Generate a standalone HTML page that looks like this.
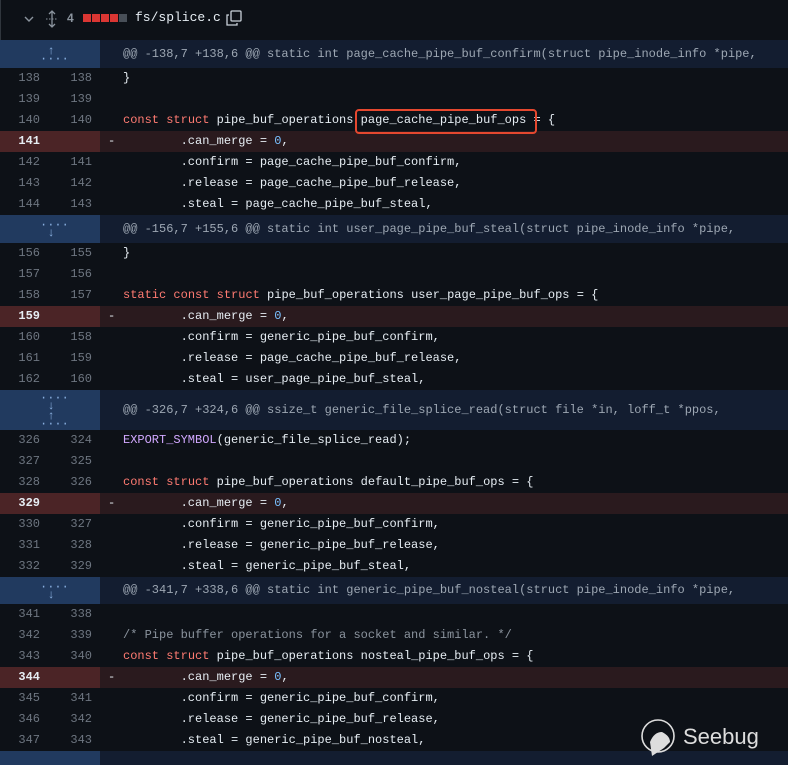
<!DOCTYPE html><html><head><style>
body{margin:0;background:#0d1117;width:788px;height:765px;overflow:hidden;font-family:"Liberation Mono",monospace;font-size:12px;color:#e6edf3;position:relative}
.hdr{position:absolute;top:0;left:0;width:788px;height:40px;background:#0d1117;border-left:1px solid #30363d}
.r{position:absolute;left:0;width:788px;height:21px;line-height:21px}
.o,.n{position:absolute;top:0;width:40px;text-align:right;color:#6e7681}
.o{left:0}.n{left:52px}
.g{position:absolute;left:0;top:0;width:100px;height:100%}
.c{position:absolute;left:123px;top:0;white-space:pre}
.d{background:#2a1a1e}.d .g{background:#4b2426}.d .o{color:#e6edf3;font-weight:bold}
.mi{position:absolute;left:108px;top:0}
.h{position:absolute;left:0;width:788px;background:#131d30}
.h .g{background:#213a5f}
.h .c{color:#9da7b3;line-height:inherit}
.k{color:#ff7b72}.m{color:#79c0ff}.p{color:#d2a8ff}.cm{color:#8b949e}
.ar{position:absolute;left:40px;width:22px;text-align:center;color:#8ab0e0;font-size:12px;line-height:8px}
</style></head><body>
<div class="hdr">
<svg style="position:absolute;left:22px;top:13px" width="12" height="12" viewBox="0 0 12 12"><path d="M2 4l4 4 4-4" stroke="#8b949e" stroke-width="1.4" fill="none"/></svg>
<svg style="position:absolute;left:44px;top:10px" width="14" height="18" viewBox="0 0 14 18"><path d="M7 1v16M4 4l3-3 3 3M4 14l3 3 3-3" stroke="#8b949e" stroke-width="1.3" fill="none"/><path d="M1 9h12" stroke="#8b949e" stroke-dasharray="1.5 1.5"/></svg>
<span style="position:absolute;left:66px;top:11px;color:#8b949e;font-family:'Liberation Sans',sans-serif;font-weight:bold;font-size:12px">4</span>
<span style="position:absolute;left:82px;top:14px;width:8px;height:8px;background:#da3633"></span>
<span style="position:absolute;left:91px;top:14px;width:8px;height:8px;background:#da3633"></span>
<span style="position:absolute;left:100px;top:14px;width:8px;height:8px;background:#da3633"></span>
<span style="position:absolute;left:109px;top:14px;width:8px;height:8px;background:#da3633"></span>
<span style="position:absolute;left:118px;top:14px;width:8px;height:8px;background:#484f58"></span>
<span style="position:absolute;left:134px;top:10px;font-size:13px;color:#e6edf3">fs/splice.c</span>
<svg style="position:absolute;left:225px;top:10px" width="16" height="16" viewBox="0 0 16 16"><rect x="5" y="1" width="10" height="10" rx="1" stroke="#c9d1d9" fill="none" stroke-width="1.3"/><path d="M3 5H1v10h10v-2" stroke="#c9d1d9" fill="none" stroke-width="1.3"/></svg>
</div>

<div class="h" style="top:40px;height:28px;line-height:28px"><div class="g"><div class="ar" style="top:7px">↑<br>····</div></div><div class="c">@@ -138,7 +138,6 @@ static int page_cache_pipe_buf_confirm(struct pipe_inode_info *pipe,</div></div>
<div class="r" style="top:68px"><span class="o">138</span><span class="n">138</span><div class="c">}</div></div>
<div class="r" style="top:89px"><span class="o">139</span><span class="n">139</span></div>
<div class="r" style="top:110px"><span class="o">140</span><span class="n">140</span><div class="c"><span class="k">const</span> <span class="k">struct</span> pipe_buf_operations page_cache_pipe_buf_ops = {</div></div>
<div class="r d" style="top:131px"><div class="g"></div><span class="o">141</span><span class="mi">-</span><div class="c">        .can_merge = <span class="m">0</span>,</div></div>
<div class="r" style="top:152px"><span class="o">142</span><span class="n">141</span><div class="c">        .confirm = page_cache_pipe_buf_confirm,</div></div>
<div class="r" style="top:173px"><span class="o">143</span><span class="n">142</span><div class="c">        .release = page_cache_pipe_buf_release,</div></div>
<div class="r" style="top:194px"><span class="o">144</span><span class="n">143</span><div class="c">        .steal = page_cache_pipe_buf_steal,</div></div>
<div style="position:absolute;left:355px;top:109px;width:178px;height:21px;border:2px solid #e5482f;border-radius:4px"></div>

<div class="h" style="top:215px;height:28px;line-height:28px"><div class="g"><div class="ar" style="top:6px">····<br>↓</div></div><div class="c">@@ -156,7 +155,6 @@ static int user_page_pipe_buf_steal(struct pipe_inode_info *pipe,</div></div>
<div class="r" style="top:243px"><span class="o">156</span><span class="n">155</span><div class="c">}</div></div>
<div class="r" style="top:264px"><span class="o">157</span><span class="n">156</span></div>
<div class="r" style="top:285px"><span class="o">158</span><span class="n">157</span><div class="c"><span class="k">static</span> <span class="k">const</span> <span class="k">struct</span> pipe_buf_operations user_page_pipe_buf_ops = {</div></div>
<div class="r d" style="top:306px"><div class="g"></div><span class="o">159</span><span class="mi">-</span><div class="c">        .can_merge = <span class="m">0</span>,</div></div>
<div class="r" style="top:327px"><span class="o">160</span><span class="n">158</span><div class="c">        .confirm = generic_pipe_buf_confirm,</div></div>
<div class="r" style="top:348px"><span class="o">161</span><span class="n">159</span><div class="c">        .release = page_cache_pipe_buf_release,</div></div>
<div class="r" style="top:369px"><span class="o">162</span><span class="n">160</span><div class="c">        .steal = user_page_pipe_buf_steal,</div></div>

<div class="h" style="top:390px;height:40px;line-height:40px"><div class="g"><div class="ar" style="top:4px">····<br>↓</div><div class="ar" style="top:22px">↑<br>····</div></div><div class="c">@@ -326,7 +324,6 @@ ssize_t generic_file_splice_read(struct file *in, loff_t *ppos,</div></div>
<div class="r" style="top:430px"><span class="o">326</span><span class="n">324</span><div class="c"><span class="p">EXPORT_SYMBOL</span>(generic_file_splice_read);</div></div>
<div class="r" style="top:451px"><span class="o">327</span><span class="n">325</span></div>
<div class="r" style="top:472px"><span class="o">328</span><span class="n">326</span><div class="c"><span class="k">const</span> <span class="k">struct</span> pipe_buf_operations default_pipe_buf_ops = {</div></div>
<div class="r d" style="top:493px"><div class="g"></div><span class="o">329</span><span class="mi">-</span><div class="c">        .can_merge = <span class="m">0</span>,</div></div>
<div class="r" style="top:514px"><span class="o">330</span><span class="n">327</span><div class="c">        .confirm = generic_pipe_buf_confirm,</div></div>
<div class="r" style="top:535px"><span class="o">331</span><span class="n">328</span><div class="c">        .release = generic_pipe_buf_release,</div></div>
<div class="r" style="top:556px"><span class="o">332</span><span class="n">329</span><div class="c">        .steal = generic_pipe_buf_steal,</div></div>

<div class="h" style="top:577px;height:27px;line-height:27px"><div class="g"><div class="ar" style="top:6px">····<br>↓</div></div><div class="c">@@ -341,7 +338,6 @@ static int generic_pipe_buf_nosteal(struct pipe_inode_info *pipe,</div></div>
<div class="r" style="top:604px"><span class="o">341</span><span class="n">338</span></div>
<div class="r" style="top:625px"><span class="o">342</span><span class="n">339</span><div class="c"><span class="cm">/* Pipe buffer operations for a socket and similar. */</span></div></div>
<div class="r" style="top:646px"><span class="o">343</span><span class="n">340</span><div class="c"><span class="k">const</span> <span class="k">struct</span> pipe_buf_operations nosteal_pipe_buf_ops = {</div></div>
<div class="r d" style="top:667px"><div class="g"></div><span class="o">344</span><span class="mi">-</span><div class="c">        .can_merge = <span class="m">0</span>,</div></div>
<div class="r" style="top:688px"><span class="o">345</span><span class="n">341</span><div class="c">        .confirm = generic_pipe_buf_confirm,</div></div>
<div class="r" style="top:709px"><span class="o">346</span><span class="n">342</span><div class="c">        .release = generic_pipe_buf_release,</div></div>
<div class="r" style="top:730px"><span class="o">347</span><span class="n">343</span><div class="c">        .steal = generic_pipe_buf_nosteal,</div></div>
<div class="h" style="top:751px;height:14px"><div class="g"></div></div>

<svg style="position:absolute;left:640px;top:718px" width="40" height="40" viewBox="0 0 40 40"><circle cx="18" cy="18" r="16" stroke="#ddd" stroke-width="1.6" fill="none"/><path d="M12 38 L10 24 Q14 14 22 14 Q30 18 30 24 L24 30 Z" fill="#ddd"/></svg>
<span style="position:absolute;left:683px;top:724px;font-family:'Liberation Sans',sans-serif;font-size:22px;color:#ddd">Seebug</span>
</body></html>
